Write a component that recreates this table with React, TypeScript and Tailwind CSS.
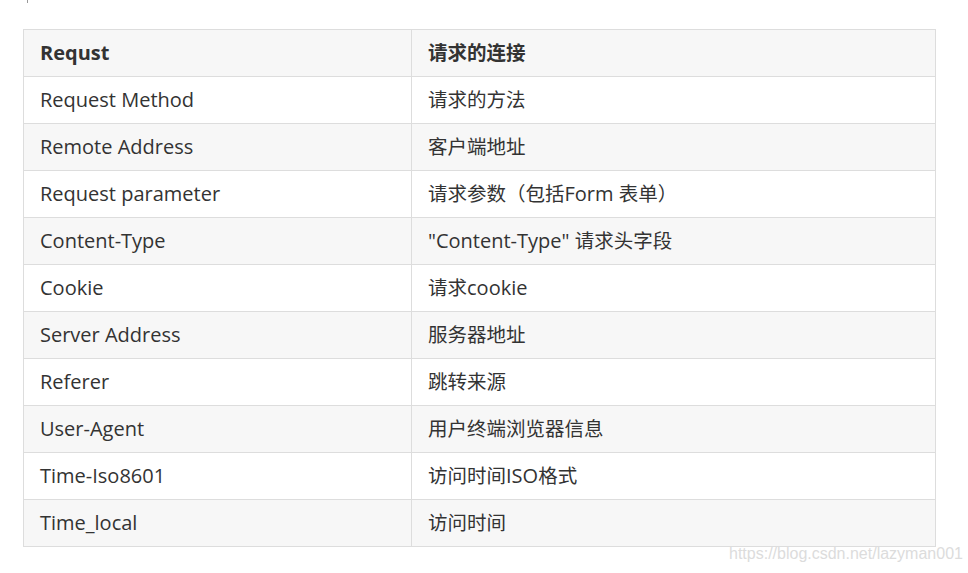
import React from "react";

const rows: [string, string][] = [
  ["Request Method", "请求的方法"],
  ["Remote Address", "客户端地址"],
  ["Request parameter", "请求参数（包括Form 表单）"],
  ["Content-Type", "\"Content-Type\" 请求头字段"],
  ["Cookie", "请求cookie"],
  ["Server Address", "服务器地址"],
  ["Referer", "跳转来源"],
  ["User-Agent", "用户终端浏览器信息"],
  ["Time-Iso8601", "访问时间ISO格式"],
  ["Time_local", "访问时间"],
];

function Mixed({ text }: { text: string }) {
  const parts = text.split(/([\u3000-\u9fff\uff00-\uffef]+)/).filter((p) => p.length > 0);
  return (
    <>
      {parts.map((p, i) =>
        /[\u3000-\u9fff\uff00-\uffef]/.test(p) ? (
          <span key={i} className="text-[19.5px]">
            {p}
          </span>
        ) : (
          <span key={i} className="text-[20px]">
            {p}
          </span>
        )
      )}
    </>
  );
}

export default function App() {
  return (
    <div
      className="relative w-[968px] h-[573px] bg-white text-[#333] overflow-hidden"
      style={{ fontFamily: '"Open Sans", "Noto Sans CJK SC", sans-serif' }}
    >
      <div className="absolute left-[27px] top-0 w-px h-[3px] bg-[#999]" />
      <div className="pt-[29px] pl-[23px]">
        <table className="w-[913px] border-collapse text-[20px] leading-[26px]">
          <thead>
            <tr className="bg-[#f7f7f7] h-[47px]">
              <th className="w-[388px] border border-[#ddd] px-4 text-left font-bold">
                <Mixed text="Requst" />
              </th>
              <th className="border border-[#ddd] px-4 text-left font-bold">
                <Mixed text="请求的连接" />
              </th>
            </tr>
          </thead>
          <tbody>
            {rows.map(([a, b], i) => (
              <tr key={a} className={`h-[47px] ${i % 2 === 1 ? "bg-[#f7f7f7]" : "bg-white"}`}>
                <td className="border border-[#ddd] px-4">
                  <Mixed text={a} />
                </td>
                <td className="border border-[#ddd] px-4">
                  <Mixed text={b} />
                </td>
              </tr>
            ))}
          </tbody>
        </table>
      </div>
      <div
        className="absolute left-[729px] top-[542px] text-[16px] text-[#dcdcdc]"
        style={{ fontFamily: '"Liberation Sans", Arial, sans-serif' }}
      >
        https://blog.csdn.net/lazyman001
      </div>
    </div>
  );
}
